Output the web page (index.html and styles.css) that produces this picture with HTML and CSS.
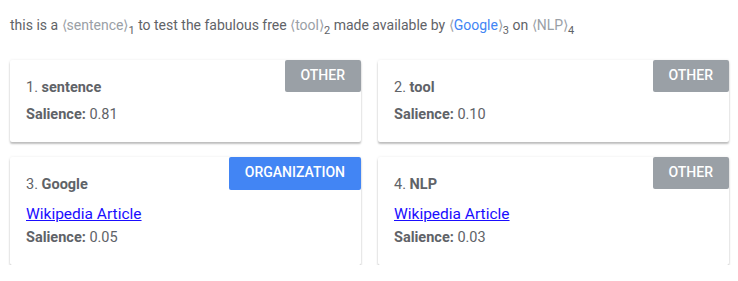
FILE: index.html
```html
<!DOCTYPE html>
<html lang="en">
<head>
    <meta charset="UTF-8">
    <meta name="viewport" content="width=device-width, initial-scale=1.0">
    <title>Entity Analysis</title>
    <link rel="stylesheet" href="styles.css">
</head>
<body>
    <p class="sentence">
        this is a <span class="mention">⟨sentence⟩<sub>1</sub></span> to test the fabulous free
        <span class="mention">⟨tool⟩<sub>2</sub></span> made available by
        <span class="mention">⟨<span class="org">Google</span>⟩<sub>3</sub></span> on
        <span class="mention">⟨NLP⟩<sub>4</sub></span>
    </p>
    <div class="entity-grid">
        <div class="entity">
            <span class="badge">Other</span>
            <div class="entity-name">1. <b>sentence</b></div>
            <div class="entity-row"><b>Salience:</b> 0.81</div>
        </div>
        <div class="entity">
            <span class="badge">Other</span>
            <div class="entity-name">2. <b>tool</b></div>
            <div class="entity-row"><b>Salience:</b> 0.10</div>
        </div>
        <div class="entity">
            <span class="badge badge-org">Organization</span>
            <div class="entity-name">3. <b>Google</b></div>
            <a class="wiki" href="#">Wikipedia Article</a>
            <div class="entity-row"><b>Salience:</b> 0.05</div>
        </div>
        <div class="entity">
            <span class="badge">Other</span>
            <div class="entity-name">4. <b>NLP</b></div>
            <a class="wiki" href="#">Wikipedia Article</a>
            <div class="entity-row"><b>Salience:</b> 0.03</div>
        </div>
    </div>
</body>
</html>
```

FILE: styles.css
```css
body {
    margin: 0;
    padding: 0 9px 0 10px;
    font-family: Roboto, "Liberation Sans", sans-serif;
    color: #5f6368;
    background-color: #fff;
}
.sentence {
    margin: 15px 0 0;
    font-size: 14px;
    line-height: 20px;
    color: #5f6368;
}
.mention {
    color: #9aa0a6;
}
.mention .org {
    color: #4285f4;
}
.sentence sub {
    font-size: 11px;
    line-height: 0;
    vertical-align: -4px;
    color: #5f6368;
}
.entity-grid {
    display: grid;
    grid-template-columns: 1fr 1fr;
    column-gap: 17px;
    row-gap: 15px;
    margin-top: 25px;
}
.entity {
    position: relative;
    background-color: #fff;
    padding: 18px 16px 17px;
    font-size: 14.5px;
    border-radius: 2px;
    box-shadow: 0 2px 2px rgba(0, 0, 0, 0.24), 0 0 3px rgba(0, 0, 0, 0.08);
}
.entity-name {
    line-height: 20px;
    margin-bottom: 7px;
}
.entity-row {
    line-height: 20px;
}
.wiki {
    display: block;
    font-size: 15.5px;
    line-height: 24px;
    margin-bottom: 2px;
    color: #1a0dff;
    width: max-content;
}
.badge {
    position: absolute;
    top: 0;
    right: 0;
    height: 32px;
    line-height: 30px;
    padding: 0 16px;
    font-size: 14px;
    font-weight: 500;
    text-transform: uppercase;
    color: #fff;
    background-color: #9aa0a6;
    border-radius: 2px;
}
.badge-org {
    background-color: #4285f4;
    height: 33px;
}
```
